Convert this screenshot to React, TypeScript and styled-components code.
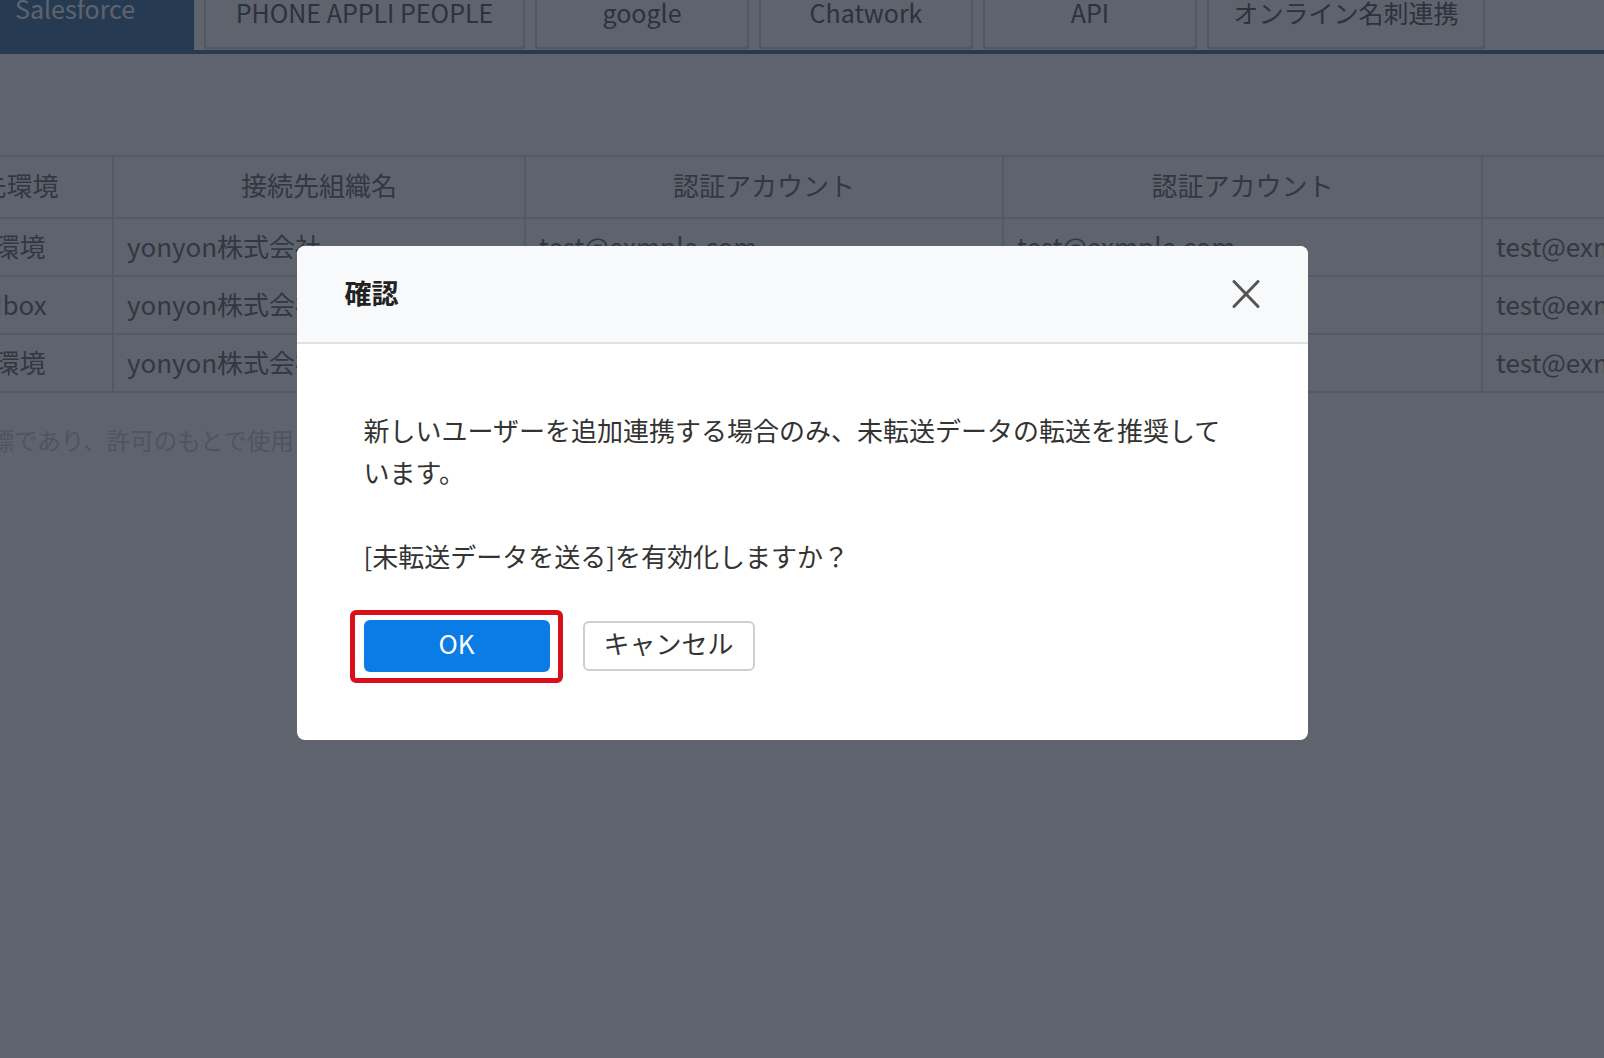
import React from "react";
import styled, { createGlobalStyle } from "styled-components";

const GlobalStyle = createGlobalStyle`
  html, body {
    margin: 0;
    padding: 0;
    background: #ffffff;
    overflow: hidden;
  }
  body {
    font-family: "Noto Sans CJK JP", "Noto Sans", sans-serif;
    color: #333333;
  }
  *, *::before, *::after {
    box-sizing: border-box;
  }
`;

const Page = styled.div`
  position: relative;
  width: 1604px;
  height: 1058px;
  overflow: hidden;
  background: #ffffff;
`;

const TabBar = styled.nav`
  display: flex;
  align-items: flex-start;
  gap: 10px;
  height: 54px;
  border-bottom: 4px solid #5380ab;
`;

const Tab = styled.div<{ $active?: boolean; $w: number }>`
  flex: none;
  width: ${(p) => p.$w}px;
  height: ${(p) => (p.$active ? 50 : 49)}px;
  font-size: 25px;
  line-height: ${(p) => (p.$active ? "16px" : "25px")};
  white-space: nowrap;
  text-align: ${(p) => (p.$active ? "left" : "center")};
  padding-left: ${(p) => (p.$active ? "15px" : "0")};
  color: ${(p) => (p.$active ? "#ffffff" : "#666666")};
  background: ${(p) => (p.$active ? "#5380ab" : "#ffffff")};
  border: ${(p) => (p.$active ? "none" : "2px solid #d8dcdf")};
  border-top: none;
`;

const Content = styled.main`
  margin-left: -127px;
  padding-top: 101px;
`;

const Table = styled.table`
  border-collapse: collapse;
  table-layout: fixed;
  width: 2088px;
  font-size: 26px;
  color: #777777;
`;

const HeadCell = styled.th`
  height: 62px;
  padding: 0 15px 6px;
  font-weight: normal;
  text-align: center;
  white-space: nowrap;
  border: 2px solid #dee2e6;
`;

const Cell = styled.td<{ $center?: boolean }>`
  height: 58px;
  padding: 0 13px 4px;
  white-space: nowrap;
  overflow: hidden;
  text-align: ${(p) => (p.$center ? "center" : "left")};
  border: 2px solid #dee2e6;
`;

const Footnote = styled.p`
  margin: 29px 0 0;
  padding-left: 0;
  font-size: 23.5px;
  line-height: 36px;
  color: #d0d0d0;
  white-space: nowrap;
`;

const Backdrop = styled.div`
  position: fixed;
  inset: 0;
  display: flex;
  justify-content: center;
  align-items: flex-start;
  padding-top: 246px;
  background: rgba(17, 25, 40, 0.68);
`;

const Dialog = styled.section`
  width: 1011px;
  background: #ffffff;
  border-radius: 8px;
  overflow: hidden;
`;

const DialogHeader = styled.header`
  display: flex;
  align-items: center;
  justify-content: space-between;
  height: 98px;
  padding: 0 48px;
  background: #f8f9fa;
  border-bottom: 2px solid #dee2e6;
`;

const DialogTitle = styled.h2`
  margin: 0;
  padding-bottom: 4px;
  font-size: 27px;
  line-height: 1;
  font-weight: 700;
  color: #222222;
`;

const CloseButton = styled.button`
  display: flex;
  align-items: center;
  justify-content: center;
  width: 28px;
  height: 30px;
  padding: 0;
  border: 0;
  background: none;
  cursor: pointer;
`;

const DialogBody = styled.div`
  padding: 65px 66px 68px 67px;
`;

const Message = styled.p<{ $gap?: boolean }>`
  margin: ${(p) => (p.$gap ? "42px 0 0" : "0")};
  font-size: 26px;
  line-height: 42px;
  color: #333333;
`;

const Actions = styled.div`
  display: flex;
  align-items: center;
  margin-top: 43px;
`;

const Highlight = styled.div`
  position: relative;
  display: flex;
`;

const HighlightFrame = styled.span`
  position: absolute;
  top: -10px;
  right: -13px;
  bottom: -11px;
  left: -14px;
  border: 5px solid #d8101c;
  border-radius: 6px;
  pointer-events: none;
`;

const PrimaryButton = styled.button`
  width: 186px;
  height: 52px;
  padding: 0 0 6px;
  border: 0;
  border-radius: 6px;
  background: #0b7ce5;
  color: #ffffff;
  font-family: inherit;
  font-size: 26px;
  line-height: 1;
  cursor: pointer;
`;

const SecondaryButton = styled.button`
  width: 172px;
  height: 50px;
  margin-left: 33px;
  padding: 0 0 6px;
  border: 2px solid #cfcfcf;
  border-radius: 6px;
  background: #ffffff;
  color: #333333;
  font-family: inherit;
  font-size: 26px;
  line-height: 1;
  cursor: pointer;
`;

const tabs = [
  { label: "Salesforce", w: 194, active: true },
  { label: "PHONE APPLI PEOPLE", w: 321 },
  { label: "google", w: 214 },
  { label: "Chatwork", w: 214 },
  { label: "API", w: 214 },
  { label: "オンライン名刺連携", w: 278 },
];

const colWidths = [239, 412, 478, 479, 480];
const headers = ["接続先環境", "接続先組織名", "認証アカウント", "認証アカウント", "認証アカウント"];
const rows = [
  ["本番環境", "yonyon株式会社", "test@exmple.com", "test@exmple.com", "test@exmple.com"],
  ["Sandbox", "yonyon株式会社", "test@exmple.com", "test@exmple.com", "test@exmple.com"],
  ["本番環境", "yonyon株式会社", "test@exmple.com", "test@exmple.com", "test@exmple.com"],
];

function CloseIcon() {
  return (
    <svg width="28" height="30" viewBox="0 0 28 30" fill="none">
      <path
        d="M2 2.5 L26 27.5 M26 2.5 L2 27.5"
        stroke="#555555"
        strokeWidth="3"
        strokeLinecap="round"
      />
    </svg>
  );
}

export default function App() {
  return (
    <Page>
      <GlobalStyle />
      <TabBar>
        {tabs.map((t) => (
          <Tab key={t.label} $active={t.active} $w={t.w}>
            {t.label}
          </Tab>
        ))}
      </TabBar>
      <Content>
        <Table>
          <colgroup>
            {colWidths.map((w, i) => (
              <col key={i} style={{ width: w }} />
            ))}
          </colgroup>
          <thead>
            <tr>
              {headers.map((h, i) => (
                <HeadCell key={i}>{h}</HeadCell>
              ))}
            </tr>
          </thead>
          <tbody>
            {rows.map((r, ri) => (
              <tr key={ri}>
                {r.map((c, ci) => (
                  <Cell key={ci} $center={ci === 0}>
                    {c}
                  </Cell>
                ))}
              </tr>
            ))}
          </tbody>
        </Table>
        <Footnote>※各社の商標であり、許可のもとで使用しています。</Footnote>
      </Content>
      <Backdrop>
        <Dialog role="dialog" aria-modal="true">
          <DialogHeader>
            <DialogTitle>確認</DialogTitle>
            <CloseButton aria-label="閉じる">
              <CloseIcon />
            </CloseButton>
          </DialogHeader>
          <DialogBody>
            <Message>
              新しいユーザーを追加連携する場合のみ、未転送データの転送を推奨しています。
            </Message>
            <Message $gap>[未転送データを送る]を有効化しますか？</Message>
            <Actions>
              <Highlight>
                <PrimaryButton>OK</PrimaryButton>
                <HighlightFrame />
              </Highlight>
              <SecondaryButton>キャンセル</SecondaryButton>
            </Actions>
          </DialogBody>
        </Dialog>
      </Backdrop>
    </Page>
  );
}
